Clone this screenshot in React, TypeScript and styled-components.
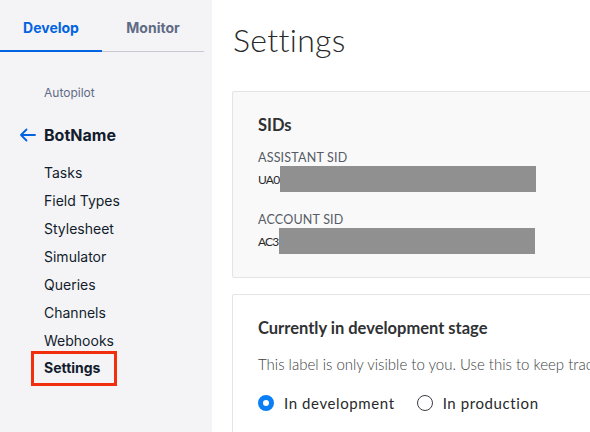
import React from "react";
import styled, { createGlobalStyle } from "styled-components";

const GlobalStyle = createGlobalStyle`
  html, body {
    margin: 0;
    padding: 0;
    background: #ffffff;
  }
  body {
    font-family: Inter, "Noto Sans", sans-serif;
  }
`;

const navItems = [
  "Tasks",
  "Field Types",
  "Stylesheet",
  "Simulator",
  "Queries",
  "Channels",
  "Webhooks",
  "Settings",
];

const App: React.FC<{}> = () => {
  return (
    <>
      <GlobalStyle />
      <Page>
        <Sidebar>
          <Tabs>
            <Tab active>Develop</Tab>
            <Tab>Monitor</Tab>
          </Tabs>
          <Crumb>Autopilot</Crumb>
          <BotTitle>
            <svg width="17" height="14" viewBox="0 0 17 14" fill="none">
              <path
                d="M16 7H2M7.5 1.5L2 7l5.5 5.5"
                stroke="#0263e0"
                strokeWidth="1.8"
                strokeLinecap="round"
                strokeLinejoin="round"
              />
            </svg>
            <span>BotName</span>
          </BotTitle>
          <NavList>
            {navItems.map((item) => (
              <NavItem key={item} current={item === "Settings"}>
                {item}
              </NavItem>
            ))}
          </NavList>
        </Sidebar>
        <Main>
          <PageTitle>Settings</PageTitle>
          <Card tone="grey">
            <CardTitle>SIDs</CardTitle>
            <Field>
              <FieldLabel>ASSISTANT SID</FieldLabel>
              <FieldValue>
                UA0
                <Redacted />
              </FieldValue>
            </Field>
            <Field>
              <FieldLabel>ACCOUNT SID</FieldLabel>
              <FieldValue>
                AC3
                <Redacted />
              </FieldValue>
            </Field>
          </Card>
          <Card tone="white">
            <CardTitle>Currently in development stage</CardTitle>
            <Help>
              This label is only visible to you. Use this to keep track of which
              assistants are live.
            </Help>
            <Radios>
              <Radio>
                <RadioDot checked />
                In development
              </Radio>
              <Radio>
                <RadioDot />
                In production
              </Radio>
            </Radios>
          </Card>
        </Main>
      </Page>
    </>
  );
};

export default App;

const Page = styled.div`
  display: flex;
  width: 590px;
  height: 432px;
  overflow: hidden;
`;

const Sidebar = styled.aside`
  flex: 0 0 212px;
  background: #f4f4f6;
  padding-top: 12px;
  box-sizing: border-box;
`;

const Tabs = styled.div`
  display: flex;
  width: 204px;
  border-bottom: 1px solid #c6c8d3;
`;

const Tab = styled.div<{ active?: boolean }>`
  flex: 1;
  text-align: center;
  height: 40px;
  line-height: 32px;
  font-size: 14px;
  font-weight: 700;
  color: ${(p) => (p.active ? "#0263e0" : "#606b85")};
  box-shadow: ${(p) => (p.active ? "inset 0 -2px 0 #0263e0" : "none")};
  margin-bottom: -1px;
`;

const Crumb = styled.div`
  margin: 32px 0 0 44px;
  font-size: 12px;
  color: #606b85;
  line-height: 18px;
`;

const BotTitle = styled.div`
  display: flex;
  align-items: center;
  gap: 8px;
  margin: 21px 0 0 19px;
  font-size: 16px;
  font-weight: 700;
  color: #121c2d;
  line-height: 24px;
`;

const NavList = styled.ul`
  list-style: none;
  margin: 12px 0 0 31px;
  padding: 0;
  display: flex;
  flex-direction: column;
  align-items: flex-start;
`;

const NavItem = styled.li<{ current?: boolean }>`
  box-sizing: border-box;
  height: ${(p) => (p.current ? "35px" : "28px")};
  padding: ${(p) => (p.current ? "0 14px 0 10px" : "0 13px")};
  line-height: ${(p) => (p.current ? "27px" : "28px")};
  font-size: 14px;
  color: #121c2d;
  font-weight: ${(p) => (p.current ? 700 : 400)};
  border: ${(p) => (p.current ? "3px solid #f22f0c" : "none")};
  margin-top: ${(p) => (p.current ? "-4px" : "0")};
`;

const Main = styled.main`
  flex: 1;
  padding: 18px 0 0 20px;
  font-family: Lato, "Open Sans", sans-serif;
  color: #282a2b;
  min-width: 0;
`;

const PageTitle = styled.h1`
  margin: 0 0 29px 1px;
  font-size: 32px;
  font-weight: 300;
  line-height: 44px;
  color: #282a2b;
  letter-spacing: 0.3px;
`;

const Card = styled.section<{ tone: "grey" | "white" }>`
  box-sizing: border-box;
  width: 420px;
  background: ${(p) => (p.tone === "grey" ? "#f9f9f9" : "#ffffff")};
  border: 1px solid #e4e4e4;
  border-radius: 2px;
  padding: 20px 25px 23px;
  margin-bottom: 16px;
`;

const CardTitle = styled.h2`
  margin: 0 0 12px;
  font-size: 16.5px;
  font-weight: 700;
  line-height: 26px;
  color: #2f3133;
`;

const Field = styled.div`
  margin-bottom: 20px;
  &:last-child {
    margin-bottom: 0;
  }
`;

const FieldLabel = styled.div`
  font-size: 12.5px;
  line-height: 16px;
  color: #565b66;
  letter-spacing: 0.2px;
`;

const FieldValue = styled.div`
  display: flex;
  align-items: center;
  font-size: 12px;
  letter-spacing: -0.8px;
  height: 26px;
  color: #282a2b;
`;

const Redacted = styled.span`
  display: block;
  width: 256px;
  height: 26px;
  margin-left: 1px;
  background: #909090;
`;

const Help = styled.p`
  margin: 10px 0 19px;
  font-size: 15px;
  font-weight: 300;
  line-height: 22px;
  white-space: nowrap;
  color: #3d3f43;
`;

const Radios = styled.div`
  display: flex;
  gap: 22px;
`;

const Radio = styled.label`
  display: flex;
  align-items: center;
  gap: 10px;
  font-size: 15px;
  letter-spacing: 0.6px;
  color: #282a2b;
`;

const RadioDot = styled.span<{ checked?: boolean }>`
  box-sizing: border-box;
  width: 16px;
  height: 16px;
  border-radius: 50%;
  border: ${(p) => (p.checked ? "5px solid #0a7ff5" : "1.5px solid #3c3f44")};
  background: #ffffff;
`;
